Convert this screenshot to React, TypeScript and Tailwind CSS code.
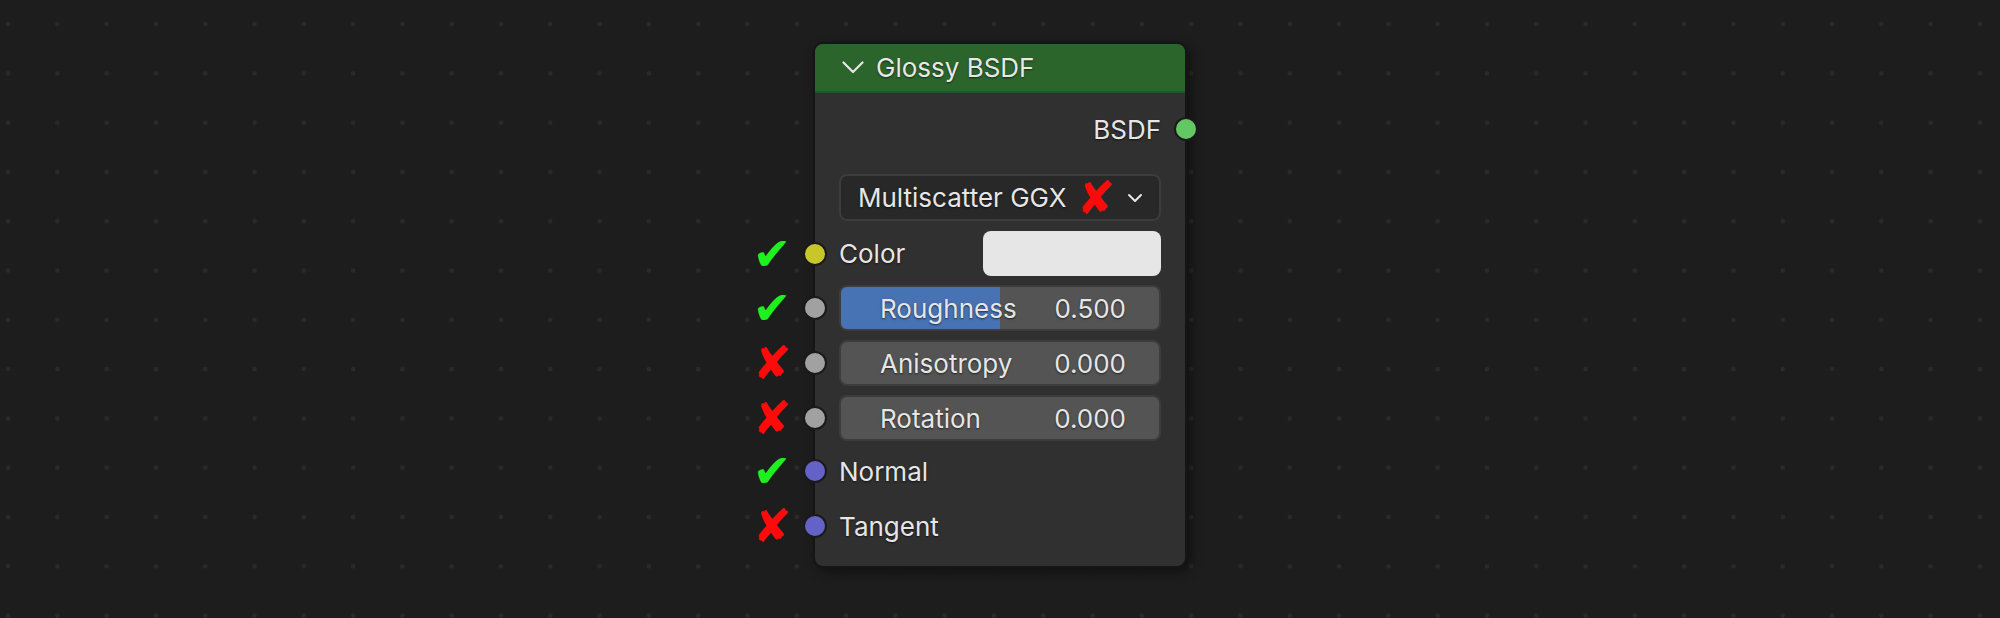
import React from 'react';

type Mark = 'ok' | 'no';

const socketColors = {
  yellow: 'bg-[#c7c729]',
  grey: 'bg-[#a1a1a1]',
  purple: 'bg-[#6363c7]',
  green: 'bg-[#63c763]',
};

const Socket: React.FC<{ color: keyof typeof socketColors; side: 'left' | 'right' }> = ({ color, side }) => (
  <span
    className={`absolute top-1/2 -translate-y-1/2 w-[24px] h-[24px] rounded-full border-[2px] border-[#1a1a1a] ${socketColors[color]} ${
      side === 'left' ? 'left-[-36px]' : 'right-[-37px]'
    }`}
  />
);

const Check: React.FC<{ mark: Mark }> = ({ mark }) => (
  <span
    className={`absolute top-1/2 -translate-y-1/2 left-[-92px] w-[50px] flex justify-center text-[46px] leading-none font-['DejaVu_Sans',sans-serif] ${
      mark === 'ok' ? 'text-[#1ff01f]' : 'text-[#ff0a0a]'
    }`}
  >
    {mark === 'ok' ? '✔' : '✘'}
  </span>
);

const shadow = '[text-shadow:0_1px_2px_rgba(0,0,0,0.6)]';

const Slider: React.FC<{ label: string; value: string; fill?: number }> = ({ label, value, fill = 0 }) => (
  <div className="relative h-[46px] rounded-[8px] border-2 border-[#3c3c3c] bg-[#545454] overflow-hidden">
    {fill > 0 && <div className="absolute inset-y-0 left-0 bg-[#4772b3]" style={{ width: `${fill * 100}%` }} />}
    <div className={`relative h-full flex items-center justify-between pl-[39px] pr-[33px] ${shadow}`}>
      <span>{label}</span>
      <span>{value}</span>
    </div>
  </div>
);

const Row: React.FC<{ children?: React.ReactNode; className?: string }> = ({ children, className = '' }) => (
  <div className={`relative ${className}`}>{children}</div>
);

export default function App() {
  return (
    <div className="w-[2000px] h-[618px] overflow-hidden bg-[#1d1d1d] bg-[radial-gradient(circle,#2a2a2a_2px,transparent_2.6px)] bg-[length:49.3px_49.3px] bg-[position:-16.6px_-0.6px] flex justify-center pt-[42px] font-['Inter',sans-serif] text-[26px] text-[#e6e6e6]">
      <div className="w-[374px] h-[526px] rounded-[10px] border-2 border-[#151515] bg-[#303030] shadow-[4px_4px_12px_rgba(0,0,0,0.45)] flex flex-col">
        {/* header */}
        <div className="h-[49px] shrink-0 rounded-t-[8px] bg-[#2c652c] border-b-2 border-[#24542a] flex items-center pl-[27px] gap-[12px]">
          <svg width="22" height="13" viewBox="0 0 22 13" fill="none">
            <path d="M1.5 1.5 L11 11 L20.5 1.5" stroke="#e6e6e6" strokeWidth="2.2" strokeLinecap="round" strokeLinejoin="round" />
          </svg>
          <span className={`text-[#e8e8e8] ${shadow}`}>Glossy BSDF</span>
        </div>

        <div className="flex flex-col px-[24px]">
          {/* output */}
          <Row className="h-[46px] mt-[13px] flex items-center justify-end">
            <span className={shadow}>BSDF</span>
            <Socket color="green" side="right" />
          </Row>

          {/* distribution dropdown */}
          <Row className="h-[47px] mt-[22px]">
            <div className="h-full rounded-[8px] border-2 border-[#3c3c3c] bg-[#282828] flex items-center pl-[17px] pr-[16px]">
              <span className={shadow}>Multiscatter GGX</span>
              <span className="ml-[10px] text-[46px] leading-none text-[#ff0a0a] font-['DejaVu_Sans',sans-serif]">✘</span>
              <svg className="ml-auto" width="16" height="10" viewBox="0 0 16 10" fill="none">
                <path d="M2 2 L8 8 L14 2" stroke="#e6e6e6" strokeWidth="2" strokeLinecap="round" strokeLinejoin="round" />
              </svg>
            </div>
          </Row>

          <Row className="h-[45px] mt-[10px] flex items-center justify-between">
            <Check mark="ok" />
            <Socket color="yellow" side="left" />
            <span className={shadow}>Color</span>
            <div className="w-[178px] h-full rounded-[8px] bg-[#e6e6e6]" />
          </Row>

          <Row className="mt-[9px]">
            <Check mark="ok" />
            <Socket color="grey" side="left" />
            <Slider label="Roughness" value="0.500" fill={0.5} />
          </Row>

          <Row className="mt-[9px]">
            <Check mark="no" />
            <Socket color="grey" side="left" />
            <Slider label="Anisotropy" value="0.000" />
          </Row>

          <Row className="mt-[9px]">
            <Check mark="no" />
            <Socket color="grey" side="left" />
            <Slider label="Rotation" value="0.000" />
          </Row>

          <Row className="h-[46px] mt-[7px] flex items-center">
            <Check mark="ok" />
            <Socket color="purple" side="left" />
            <span className={shadow}>Normal</span>
          </Row>

          <Row className="h-[46px] mt-[9px] flex items-center">
            <Check mark="no" />
            <Socket color="purple" side="left" />
            <span className={shadow}>Tangent</span>
          </Row>
        </div>
      </div>
    </div>
  );
}
